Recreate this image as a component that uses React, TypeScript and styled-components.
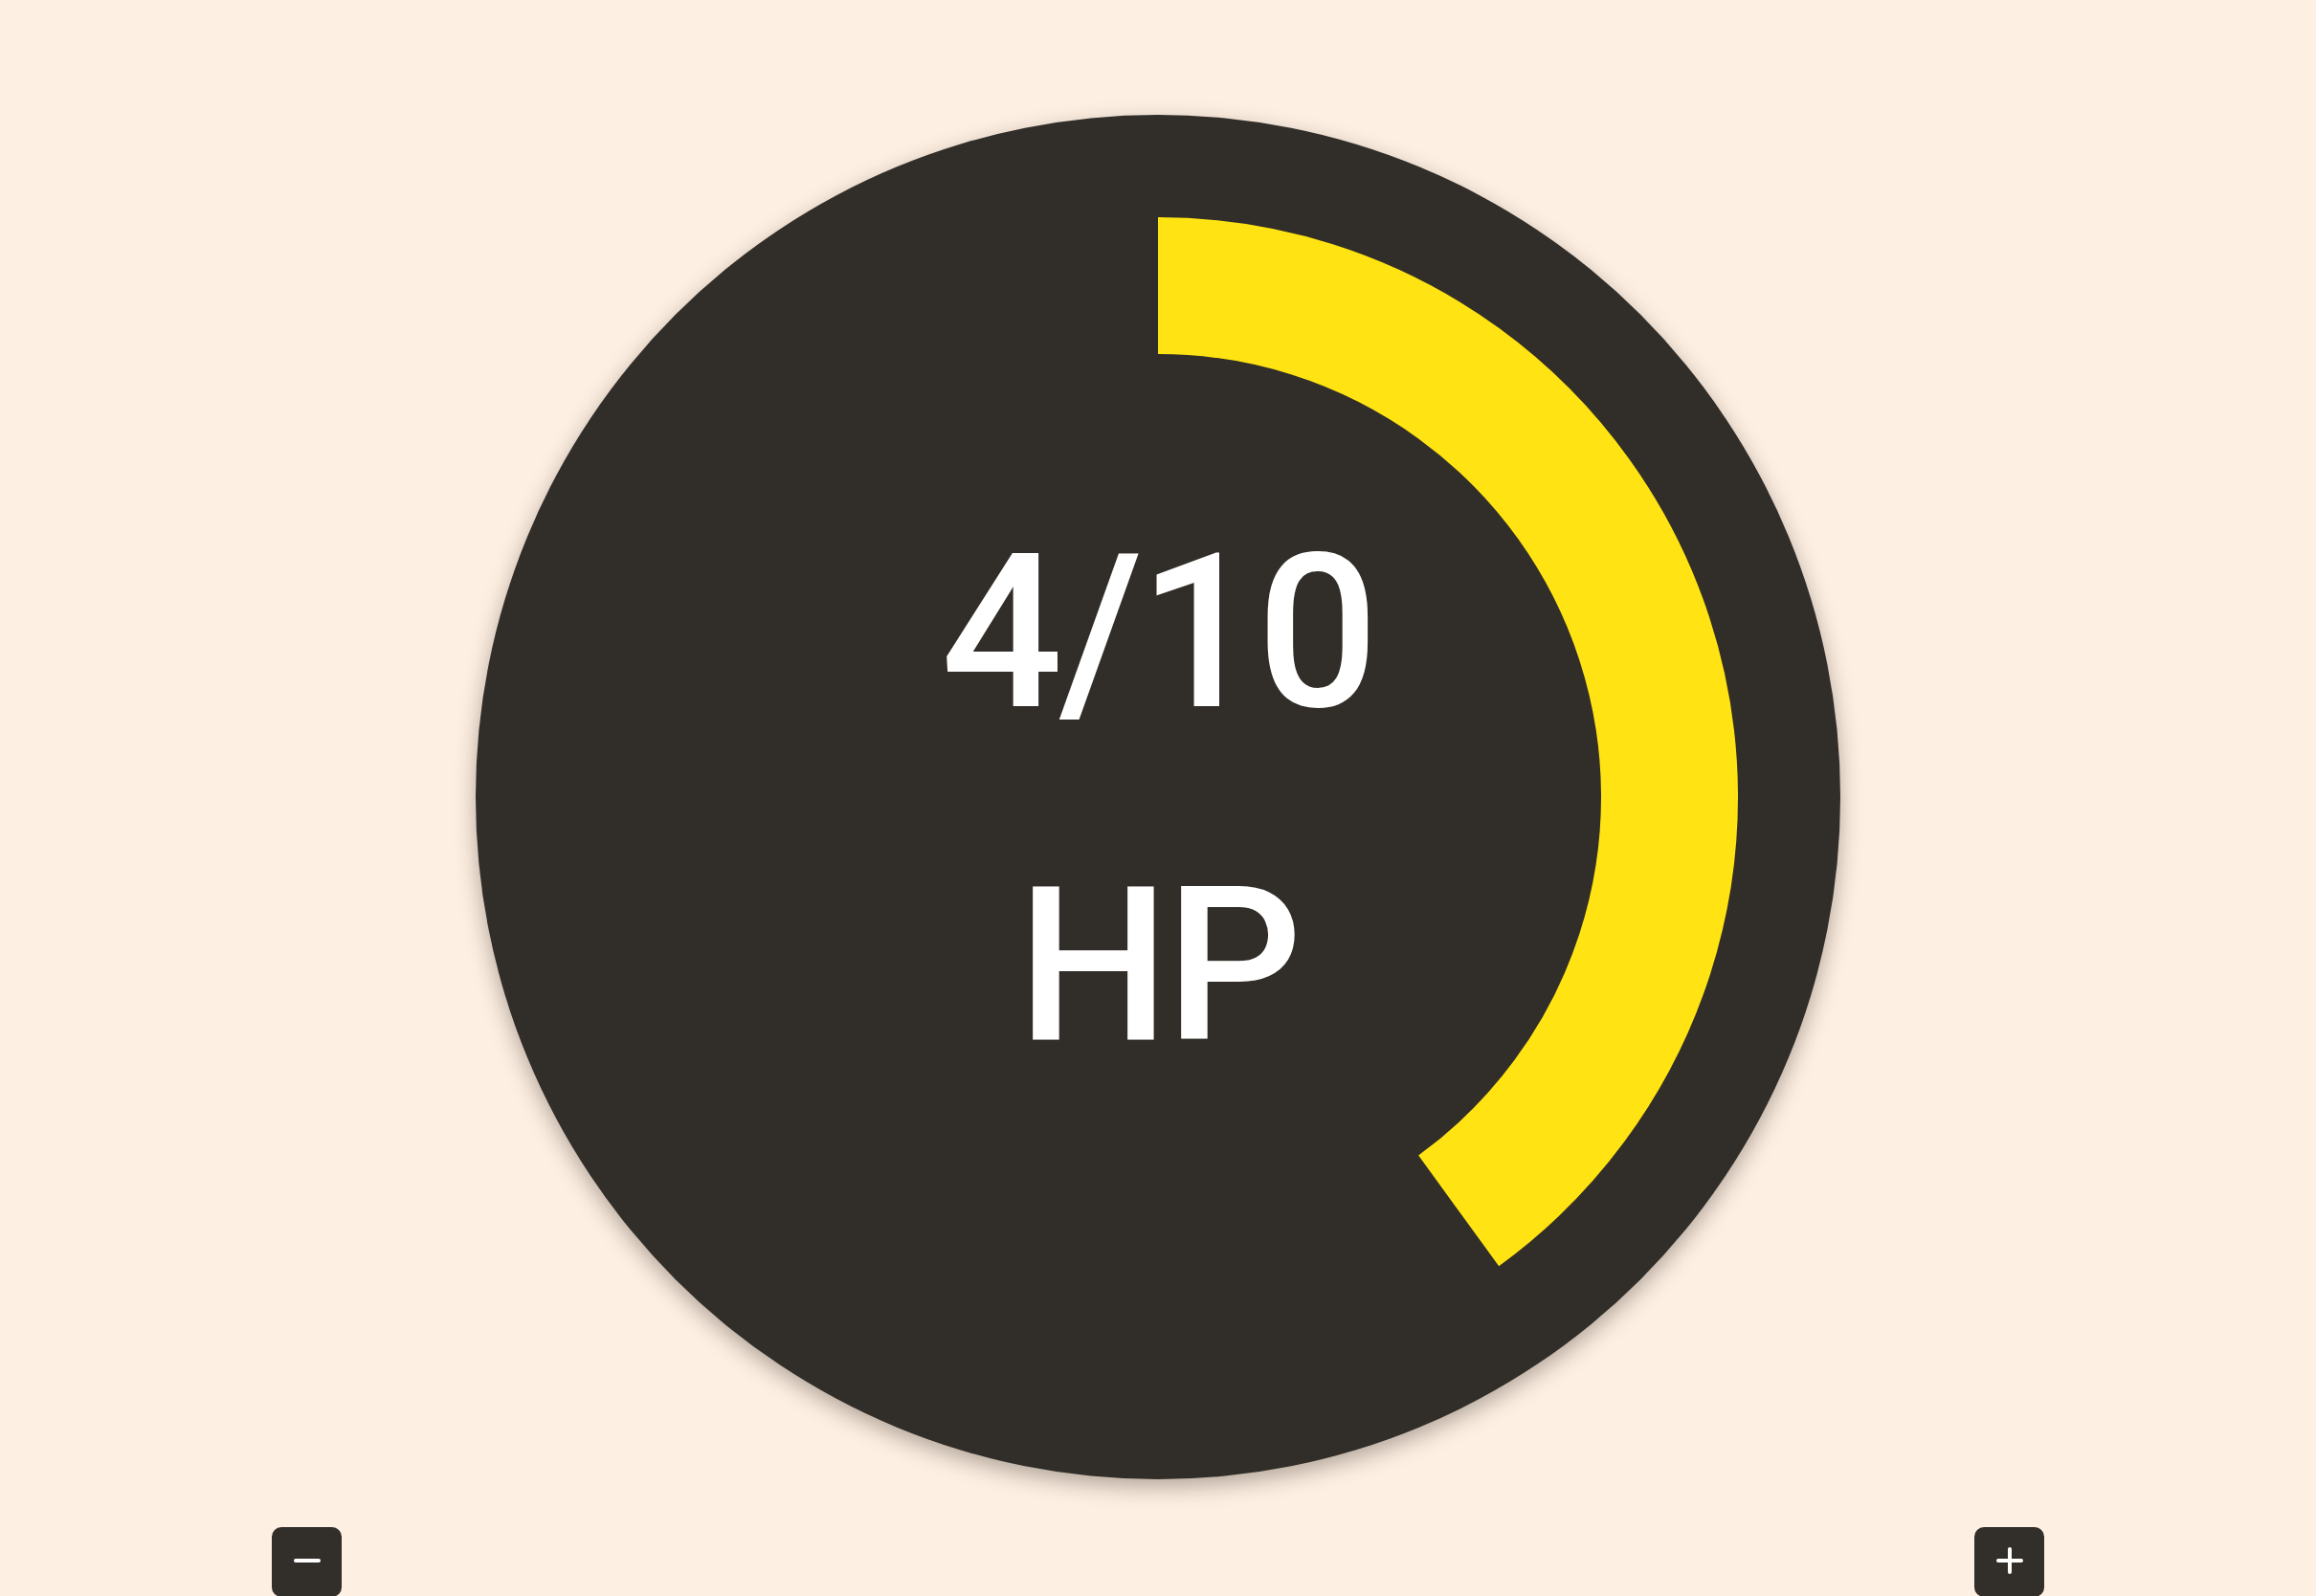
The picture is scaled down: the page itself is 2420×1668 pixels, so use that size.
import React from "react";
import styled, { createGlobalStyle } from "styled-components";

const GlobalStyle = createGlobalStyle`
  html, body {
    margin: 0;
    padding: 0;
    background-color: #fdefe2;
    font-family: Roboto, "Liberation Sans", sans-serif;
  }
`;

const DIAL = 1426;
const RING_RADIUS = 534.5;
const RING_WIDTH = 143;

const Page = styled.main`
  display: flex;
  flex-direction: column;
  align-items: center;
  padding-top: 120px;
  min-height: 1800px;
  box-sizing: border-box;
`;
const Dial = styled.div`
  position: relative;
  width: ${DIAL}px;
  height: ${DIAL}px;
  border-radius: 50%;
  background-color: #312d28;
  box-shadow: 0 8px 22px rgba(40, 30, 20, 0.35);
  display: flex;
  flex-direction: column;
  align-items: center;
  justify-content: center;
  padding-top: 6px;
  box-sizing: border-box;
`;
const Ring = styled.svg`
  position: absolute;
  inset: 0;
`;
const Label = styled.div`
  position: relative;
  color: #ffffff;
  font-size: 224px;
  font-weight: 500;
  letter-spacing: -4px;
  line-height: 348px;
  text-align: center;
`;
const Controls = styled.div`
  width: 100%;
  box-sizing: border-box;
  padding: 0 284px;
  margin-top: 50px;
  display: flex;
  justify-content: space-between;
`;
const StepButton = styled.button`
  width: 73px;
  height: 73px;
  border: none;
  border-radius: 10px;
  background-color: #322e29;
  display: flex;
  align-items: center;
  justify-content: center;
  padding: 0 0 4px;
  cursor: pointer;
`;

function Glyph({ plus }: { plus?: boolean }) {
  return (
    <svg width="28" height="28" viewBox="0 0 28 28">
      <line x1="2" y1="14" x2="26" y2="14" stroke="#fff" strokeWidth="4" strokeLinecap="round" />
      {plus && <line x1="14" y1="2" x2="14" y2="26" stroke="#fff" strokeWidth="4" strokeLinecap="round" />}
    </svg>
  );
}

export default function App() {
  const hp = 4;
  const max = 10;
  const c = DIAL / 2;
  const angle = (hp / max) * Math.PI * 2;
  const ex = c + RING_RADIUS * Math.sin(angle);
  const ey = c - RING_RADIUS * Math.cos(angle);
  const large = hp / max > 0.5 ? 1 : 0;

  return (
    <>
      <GlobalStyle />
      <Page>
        <Dial>
          <Ring width={DIAL} height={DIAL} viewBox={`0 0 ${DIAL} ${DIAL}`}>
            <path
              d={`M ${c} ${c - RING_RADIUS} A ${RING_RADIUS} ${RING_RADIUS} 0 ${large} 1 ${ex} ${ey}`}
              fill="none"
              stroke="#ffe312"
              strokeWidth={RING_WIDTH}
            />
          </Ring>
          <Label>
            {hp}/{max}
          </Label>
          <Label>HP</Label>
        </Dial>
        <Controls>
          <StepButton aria-label="decrease">
            <Glyph />
          </StepButton>
          <StepButton aria-label="increase">
            <Glyph plus />
          </StepButton>
        </Controls>
      </Page>
    </>
  );
}
